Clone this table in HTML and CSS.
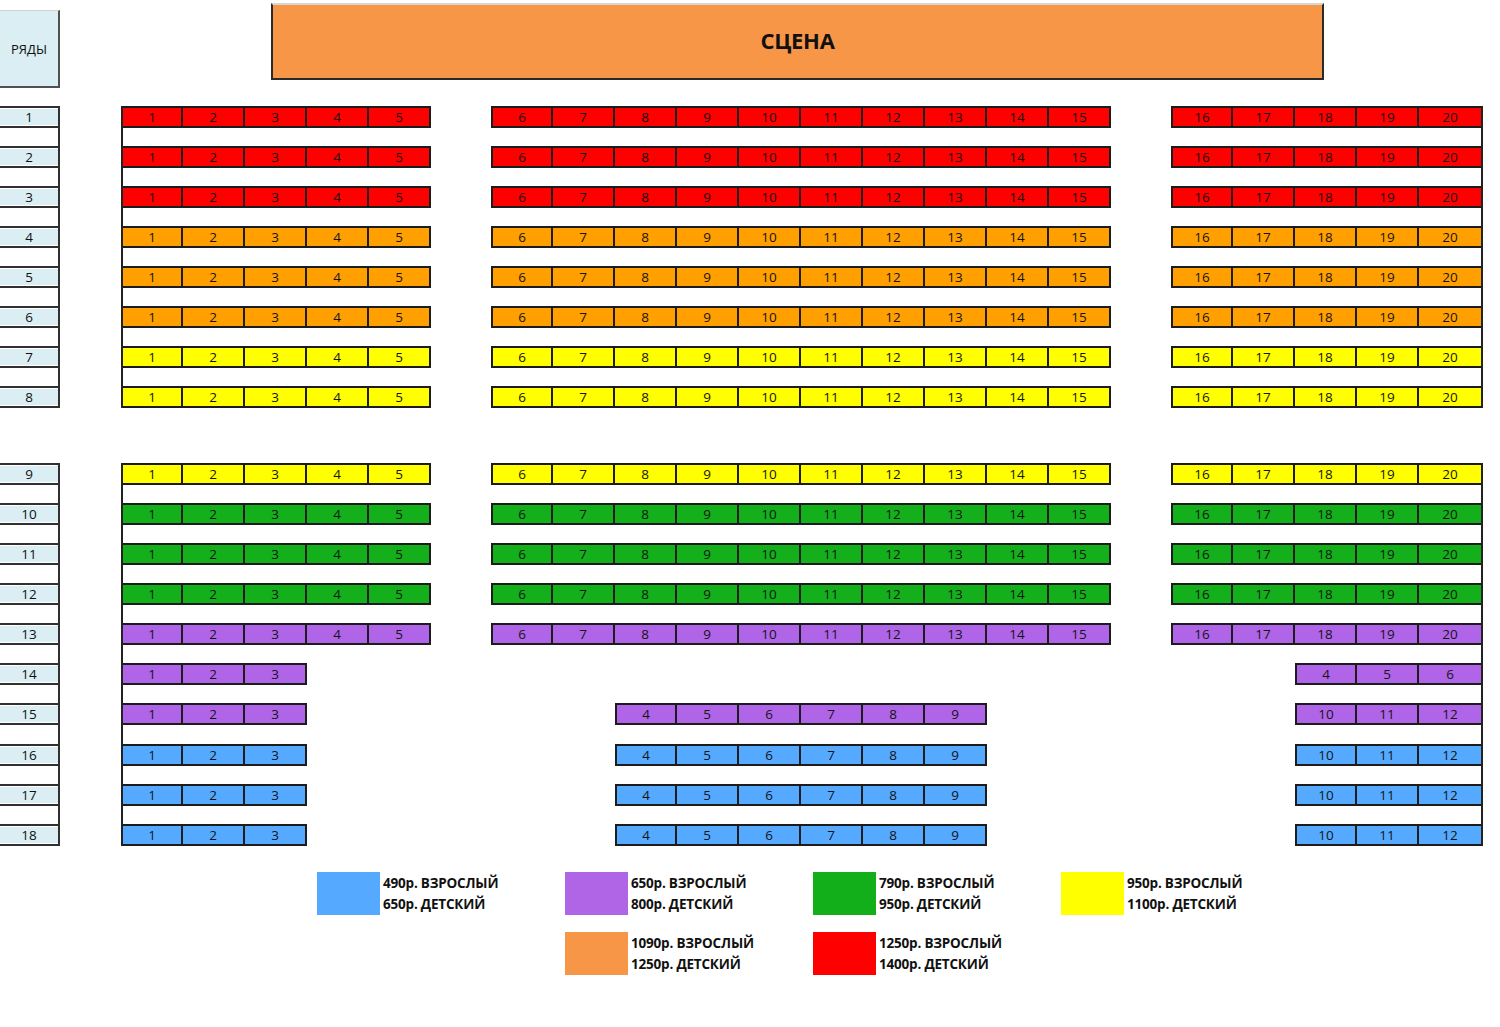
FILE: index.html
```html
<!DOCTYPE html>
<html lang="ru">
<head>
<meta charset="utf-8">
<title>Схема зала</title>
<link rel="stylesheet" href="styles.css">
</head>
<body>
<div class="page">
  <header class="top">
    <div class="rows-title">РЯДЫ</div>
    <div class="stage">СЦЕНА</div>
  </header>

  <section class="hall first-part">
    <div class="labels">
      <div class="lab">1</div><div class="lab">2</div><div class="lab">3</div><div class="lab">4</div>
      <div class="lab">5</div><div class="lab">6</div><div class="lab">7</div><div class="lab">8</div>
    </div>
    <div class="block left">
      <div class="row red"><span>1</span><span>2</span><span>3</span><span>4</span><span>5</span></div>
      <div class="row red"><span>1</span><span>2</span><span>3</span><span>4</span><span>5</span></div>
      <div class="row red"><span>1</span><span>2</span><span>3</span><span>4</span><span>5</span></div>
      <div class="row orange"><span>1</span><span>2</span><span>3</span><span>4</span><span>5</span></div>
      <div class="row orange"><span>1</span><span>2</span><span>3</span><span>4</span><span>5</span></div>
      <div class="row orange"><span>1</span><span>2</span><span>3</span><span>4</span><span>5</span></div>
      <div class="row yellow"><span>1</span><span>2</span><span>3</span><span>4</span><span>5</span></div>
      <div class="row yellow"><span>1</span><span>2</span><span>3</span><span>4</span><span>5</span></div>
    </div>
    <div class="block mid">
      <div class="row red"><span>6</span><span>7</span><span>8</span><span>9</span><span>10</span><span>11</span><span>12</span><span>13</span><span>14</span><span>15</span></div>
      <div class="row red"><span>6</span><span>7</span><span>8</span><span>9</span><span>10</span><span>11</span><span>12</span><span>13</span><span>14</span><span>15</span></div>
      <div class="row red"><span>6</span><span>7</span><span>8</span><span>9</span><span>10</span><span>11</span><span>12</span><span>13</span><span>14</span><span>15</span></div>
      <div class="row orange"><span>6</span><span>7</span><span>8</span><span>9</span><span>10</span><span>11</span><span>12</span><span>13</span><span>14</span><span>15</span></div>
      <div class="row orange"><span>6</span><span>7</span><span>8</span><span>9</span><span>10</span><span>11</span><span>12</span><span>13</span><span>14</span><span>15</span></div>
      <div class="row orange"><span>6</span><span>7</span><span>8</span><span>9</span><span>10</span><span>11</span><span>12</span><span>13</span><span>14</span><span>15</span></div>
      <div class="row yellow"><span>6</span><span>7</span><span>8</span><span>9</span><span>10</span><span>11</span><span>12</span><span>13</span><span>14</span><span>15</span></div>
      <div class="row yellow"><span>6</span><span>7</span><span>8</span><span>9</span><span>10</span><span>11</span><span>12</span><span>13</span><span>14</span><span>15</span></div>
    </div>
    <div class="block right">
      <div class="row red"><span>16</span><span>17</span><span>18</span><span>19</span><span>20</span></div>
      <div class="row red"><span>16</span><span>17</span><span>18</span><span>19</span><span>20</span></div>
      <div class="row red"><span>16</span><span>17</span><span>18</span><span>19</span><span>20</span></div>
      <div class="row orange"><span>16</span><span>17</span><span>18</span><span>19</span><span>20</span></div>
      <div class="row orange"><span>16</span><span>17</span><span>18</span><span>19</span><span>20</span></div>
      <div class="row orange"><span>16</span><span>17</span><span>18</span><span>19</span><span>20</span></div>
      <div class="row yellow"><span>16</span><span>17</span><span>18</span><span>19</span><span>20</span></div>
      <div class="row yellow"><span>16</span><span>17</span><span>18</span><span>19</span><span>20</span></div>
    </div>
  </section>

  <section class="hall second-part">
    <div class="labels">
      <div class="lab">9</div><div class="lab">10</div><div class="lab">11</div><div class="lab">12</div><div class="lab">13</div>
      <div class="lab">14</div><div class="lab">15</div><div class="lab">16</div><div class="lab">17</div><div class="lab">18</div>
    </div>
    <div class="block left">
      <div class="row yellow"><span>1</span><span>2</span><span>3</span><span>4</span><span>5</span></div>
      <div class="row green"><span>1</span><span>2</span><span>3</span><span>4</span><span>5</span></div>
      <div class="row green"><span>1</span><span>2</span><span>3</span><span>4</span><span>5</span></div>
      <div class="row green"><span>1</span><span>2</span><span>3</span><span>4</span><span>5</span></div>
      <div class="row purple"><span>1</span><span>2</span><span>3</span><span>4</span><span>5</span></div>
      <div class="row purple"><span>1</span><span>2</span><span>3</span></div>
      <div class="row purple"><span>1</span><span>2</span><span>3</span></div>
      <div class="row blue"><span>1</span><span>2</span><span>3</span></div>
      <div class="row blue"><span>1</span><span>2</span><span>3</span></div>
      <div class="row blue"><span>1</span><span>2</span><span>3</span></div>
    </div>
    <div class="block mid">
      <div class="row yellow"><span>6</span><span>7</span><span>8</span><span>9</span><span>10</span><span>11</span><span>12</span><span>13</span><span>14</span><span>15</span></div>
      <div class="row green"><span>6</span><span>7</span><span>8</span><span>9</span><span>10</span><span>11</span><span>12</span><span>13</span><span>14</span><span>15</span></div>
      <div class="row green"><span>6</span><span>7</span><span>8</span><span>9</span><span>10</span><span>11</span><span>12</span><span>13</span><span>14</span><span>15</span></div>
      <div class="row green"><span>6</span><span>7</span><span>8</span><span>9</span><span>10</span><span>11</span><span>12</span><span>13</span><span>14</span><span>15</span></div>
      <div class="row purple"><span>6</span><span>7</span><span>8</span><span>9</span><span>10</span><span>11</span><span>12</span><span>13</span><span>14</span><span>15</span></div>
      <div class="row empty"></div>
      <div class="row purple"><span class="from3">4</span><span>5</span><span>6</span><span>7</span><span>8</span><span>9</span></div>
      <div class="row blue"><span class="from3">4</span><span>5</span><span>6</span><span>7</span><span>8</span><span>9</span></div>
      <div class="row blue"><span class="from3">4</span><span>5</span><span>6</span><span>7</span><span>8</span><span>9</span></div>
      <div class="row blue"><span class="from3">4</span><span>5</span><span>6</span><span>7</span><span>8</span><span>9</span></div>
    </div>
    <div class="block right">
      <div class="row yellow"><span>16</span><span>17</span><span>18</span><span>19</span><span>20</span></div>
      <div class="row green"><span>16</span><span>17</span><span>18</span><span>19</span><span>20</span></div>
      <div class="row green"><span>16</span><span>17</span><span>18</span><span>19</span><span>20</span></div>
      <div class="row green"><span>16</span><span>17</span><span>18</span><span>19</span><span>20</span></div>
      <div class="row purple"><span>16</span><span>17</span><span>18</span><span>19</span><span>20</span></div>
      <div class="row purple"><span class="from3">4</span><span>5</span><span>6</span></div>
      <div class="row purple"><span class="from3">10</span><span>11</span><span>12</span></div>
      <div class="row blue"><span class="from3">10</span><span>11</span><span>12</span></div>
      <div class="row blue"><span class="from3">10</span><span>11</span><span>12</span></div>
      <div class="row blue"><span class="from3">10</span><span>11</span><span>12</span></div>
    </div>
  </section>

  <section class="legend">
    <div class="item"><div class="swatch sw-blue"></div><div class="price">490р. ВЗРОСЛЫЙ<br>650р. ДЕТСКИЙ</div></div>
    <div class="item"><div class="swatch sw-purple"></div><div class="price">650р. ВЗРОСЛЫЙ<br>800р. ДЕТСКИЙ</div></div>
    <div class="item"><div class="swatch sw-green"></div><div class="price">790р. ВЗРОСЛЫЙ<br>950р. ДЕТСКИЙ</div></div>
    <div class="item"><div class="swatch sw-yellow"></div><div class="price">950р. ВЗРОСЛЫЙ<br>1100р. ДЕТСКИЙ</div></div>
    <div class="item col2"><div class="swatch sw-orange"></div><div class="price">1090р. ВЗРОСЛЫЙ<br>1250р. ДЕТСКИЙ</div></div>
    <div class="item"><div class="swatch sw-red"></div><div class="price">1250р. ВЗРОСЛЫЙ<br>1400р. ДЕТСКИЙ</div></div>
  </section>
</div>
</body>
</html>
```

FILE: styles.css
```css
* { box-sizing: border-box; }

html, body {
  margin: 0;
  padding: 0;
  background: #ffffff;
}

body {
  font-family: "Open Sans", "Liberation Sans", sans-serif;
  color: #111111;
}

.page {
  width: 1500px;
}

/* header */
.top {
  display: flex;
  align-items: flex-start;
  padding-top: 3px;
  height: 88px;
}

.rows-title {
  width: 60px;
  height: 78px;
  margin-top: 7px;
  background: #daeef3;
  border-top: 1px solid #d0d0d0;
  border-right: 2px solid #505050;
  border-bottom: 2px solid #505050;
  display: flex;
  align-items: center;
  justify-content: center;
  font-size: 13px;
}

.stage {
  width: 1053px;
  height: 77px;
  margin-left: 211px;
  padding-bottom: 4px;
  background: #f79646;
  border-top: 2px solid #d6d6d6;
  border-left: 2px solid #2a2a2a;
  border-right: 2px solid #2a2a2a;
  border-bottom: 2px solid #2a2a2a;
  display: flex;
  align-items: center;
  justify-content: center;
  font-size: 22px;
  font-weight: 700;
  letter-spacing: -0.3px;
  color: #111;
}

/* hall */
.hall {
  display: flex;
  align-items: stretch;
}

.first-part { margin-top: 18px; }
.second-part { margin-top: 55px; }

.labels {
  width: 60px;
  display: flex;
  flex-direction: column;
  gap: 18px;
  border-right: 2px solid #303030;
}

.lab {
  height: 22px;
  padding-top: 1px;
  background: #daeef3;
  border-top: 2px solid #303030;
  border-bottom: 2px solid #303030;
  box-shadow: inset 0 1px 0 #ffffff, inset 0 -1px 0 #ffffff;
  display: flex;
  align-items: center;
  justify-content: center;
  font-size: 13.5px;
  line-height: 1;
}

.block {
  display: flex;
  flex-direction: column;
  gap: 18px;
}

.block.left {
  margin-left: 61px;
  border-left: 2px solid #222;
}

.block.mid {
  margin-left: 60px;
}

.block.right {
  margin-left: 60px;
  border-right: 2px solid #222;
}

/* the lower rows sit one pixel lower in the original drawing */
.second-part .lab:nth-child(8),
.second-part .row:nth-child(8) {
  margin-top: 1px;
}

.row {
  height: 22px;
  display: grid;
}

.left .row { grid-template-columns: 60px repeat(4, 62px); }
.mid .row { grid-template-columns: repeat(10, 62px); }
.right .row { grid-template-columns: repeat(5, 62px); }

.row span {
  display: flex;
  align-items: center;
  justify-content: center;
  padding-top: 1px;
  border-top: 2px solid #1c1c1c;
  border-bottom: 2px solid #1c1c1c;
  border-right: 2px solid #1c1c1c;
  font-size: 13.5px;
  line-height: 1;
  color: #141414;
}

.mid .row span:first-child,
.right .row span:first-child {
  border-left: 2px solid #1c1c1c;
}

.right .row span:last-child {
  border-right: 0;
}

.row .from3 { grid-column-start: 3; }

.red span { background: #ff0000; }
.orange span { background: #ffa000; }
.yellow span { background: #ffff00; }
.green span { background: #13b01b; }
.purple span { background: #b065e8; }
.blue span { background: #55aaff; }

/* legend */
.legend {
  margin-top: 26px;
  margin-left: 317px;
  display: grid;
  grid-template-columns: repeat(4, 248px);
  row-gap: 17px;
}

.legend .col2 { grid-column-start: 2; }

.item {
  display: flex;
  align-items: flex-start;
}

.swatch {
  width: 63px;
  height: 43px;
  flex: none;
}

.sw-blue { background: #55aaff; }
.sw-purple { background: #b065e6; }
.sw-green { background: #13af1a; }
.sw-yellow { background: #ffff00; }
.sw-orange { background: #f79646; }
.sw-red { background: #ff0000; }

.price {
  margin-left: 3px;
  padding-top: 1px;
  font-size: 13.5px;
  font-weight: 700;
  line-height: 21px;
  letter-spacing: -0.2px;
  color: #111;
}
```
